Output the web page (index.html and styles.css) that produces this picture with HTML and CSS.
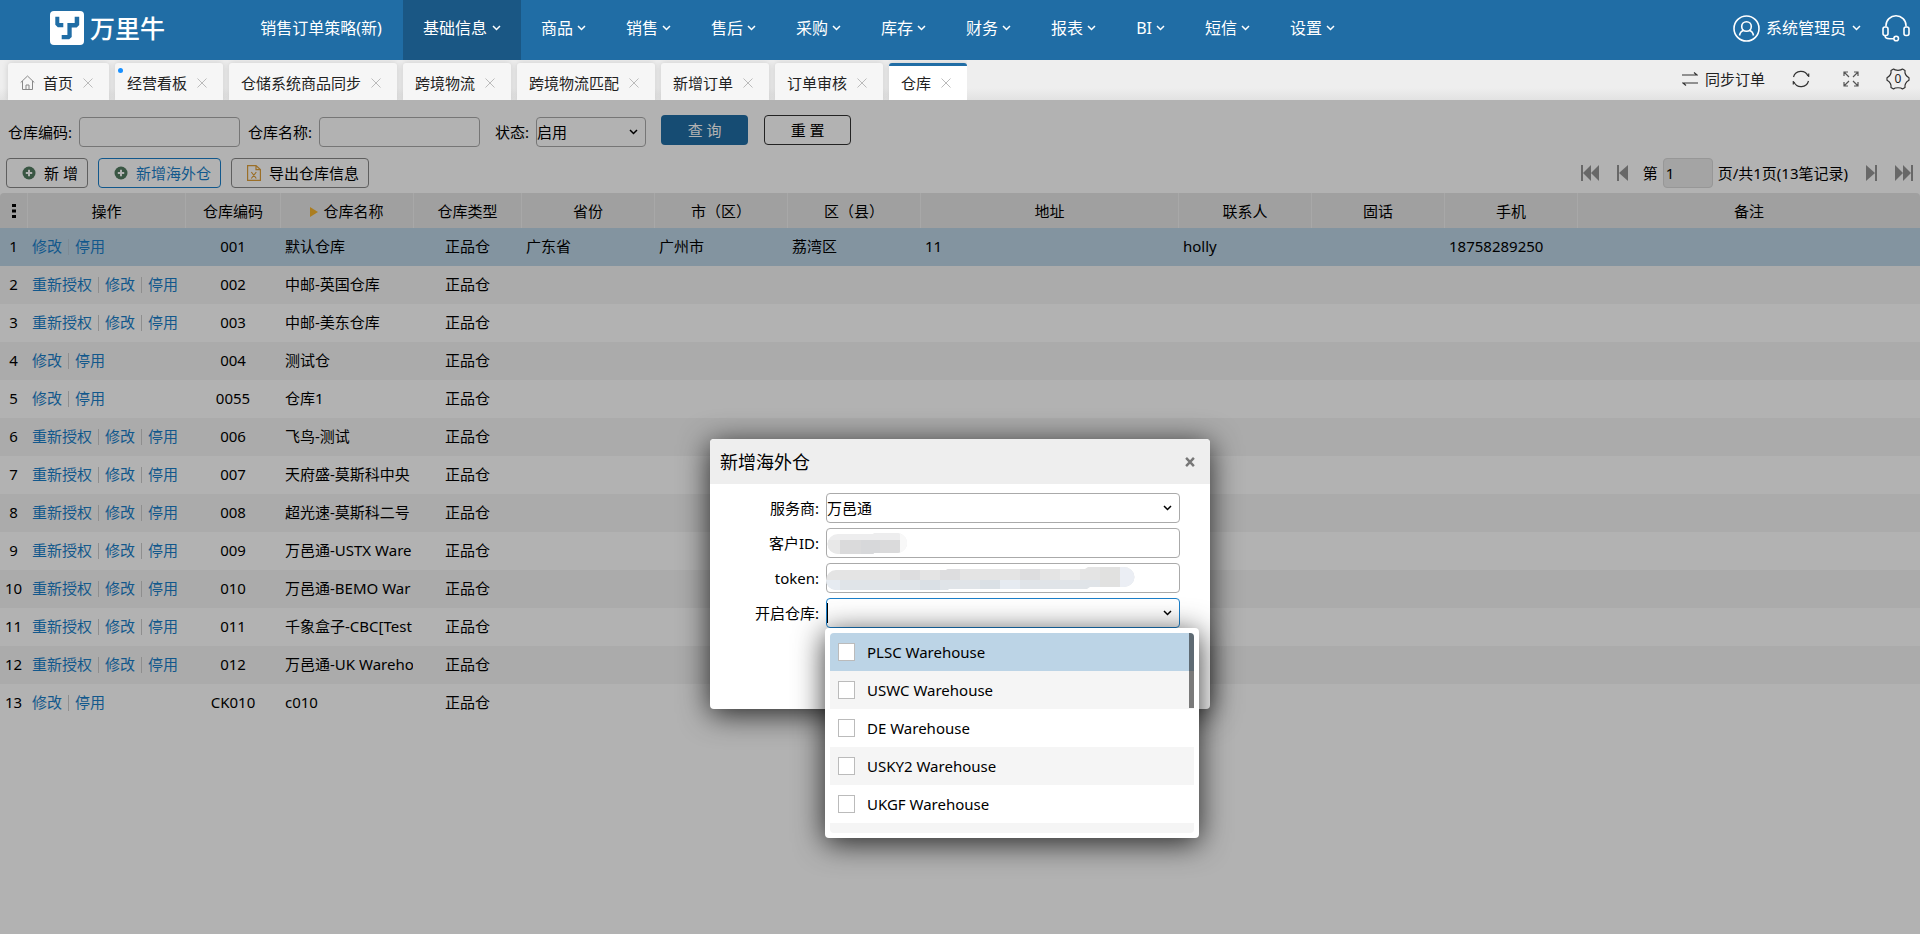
FILE: index.html
```html
<!DOCTYPE html>
<html lang="zh-CN">
<head>
<meta charset="utf-8">
<title>万里牛 - 仓库</title>
<link rel="stylesheet" href="styles.css">
</head>
<body>
<svg class="sprite" aria-hidden="true">
  <symbol id="chevron" viewBox="0 0 9 6"><path d="M1 1l3.5 3.5L8 1" fill="none" stroke="currentColor" stroke-width="1.5"/></symbol>
  <symbol id="cross" viewBox="0 0 10 10"><path d="M.5.5l9 9M9.500.5l-9 9" fill="none" stroke="currentColor" stroke-width="1"/></symbol>
  <symbol id="plus" viewBox="0 0 14 14"><circle cx="7" cy="7" r="6.500" fill="currentColor"/><path d="M7 3.800v6.400M3.800 7h6.400" stroke="#fff" stroke-width="2"/></symbol>
  <symbol id="page-prev" viewBox="0 0 11 16"><path d="M0 0h2v16H0zM11 0v16L2 8z" fill="currentColor"/></symbol>
  <symbol id="page-first" viewBox="0 0 18 16"><path d="M0 0h2v16H0zM10 0v16L2 8zM18 0v16l-8-8z" fill="currentColor"/></symbol>
</svg>

<header class="topbar">
  <a class="logo" href="#" aria-label="万里牛">
    <svg width="34" height="34" viewBox="0 0 34 34"><rect width="34" height="34" rx="4" fill="#fff"/><path d="M5.300 5.700h4v6.300h4v4.300h-5.500l-2.500-2.500zM24.700 5.700h4.500v8.300l-2.500 2.500h-5V26l-2.500 2.300h-7.500V24h5.700V12h7.300z" fill="#206da5"/></svg>
    <span>万里牛</span>
  </a>
  <nav class="menu">
    <a href="#">销售订单策略(新)</a>
    <a href="#" class="current">基础信息<svg class="chev"><use href="#chevron"/></svg></a>
    <a href="#">商品<svg class="chev"><use href="#chevron"/></svg></a>
    <a href="#">销售<svg class="chev"><use href="#chevron"/></svg></a>
    <a href="#">售后<svg class="chev"><use href="#chevron"/></svg></a>
    <a href="#">采购<svg class="chev"><use href="#chevron"/></svg></a>
    <a href="#">库存<svg class="chev"><use href="#chevron"/></svg></a>
    <a href="#">财务<svg class="chev"><use href="#chevron"/></svg></a>
    <a href="#">报表<svg class="chev"><use href="#chevron"/></svg></a>
    <a href="#">BI<svg class="chev"><use href="#chevron"/></svg></a>
    <a href="#">短信<svg class="chev"><use href="#chevron"/></svg></a>
    <a href="#">设置<svg class="chev"><use href="#chevron"/></svg></a>
  </nav>
  <div class="account">
    <a href="#" class="user">
      <svg width="27" height="27" viewBox="0 0 27 27" fill="none" stroke="#fff" stroke-width="1.600"><circle cx="13.500" cy="13.500" r="12.500"/><circle cx="13.500" cy="11.500" r="4.800"/><path d="M6.500 20.500c.5-3 2-4.500 4.500-5.200M20.500 20.500c-.5-3-2-4.500-4.500-5.200"/></svg>
      <span>系统管理员</span><svg class="chev"><use href="#chevron"/></svg>
    </a>
    <button class="icon-btn" type="button" aria-label="客服">
      <svg width="28" height="28" viewBox="0 0 28 28" fill="none" stroke="#fff" stroke-width="1.600"><path d="M4 12.500V11.500a10 9.700 0 0 1 20 0v1"/><rect x="1" y="13" width="5" height="8.500" rx="2"/><rect x="22" y="13" width="5" height="8.500" rx="2"/><path d="M3 21.500c0 2 2 3.300 4.500 3.300H12"/><circle cx="14.200" cy="24.500" r="2.300"/></svg>
    </button>
  </div>
</header>

<div class="tabbar">
  <div class="tabs">
    <div class="tab"><svg class="home" width="15" height="15" viewBox="0 0 15 15" fill="none" stroke="#888" stroke-width="1"><path d="M.7 7.500L7.500 1l6.800 6.500M2.500 6v8.500h10V6M6 14.500V10h3v4.500"/></svg><a href="#">首页</a><button type="button" aria-label="关闭"><svg><use href="#cross"/></svg></button></div>
    <div class="tab"><i class="dot"></i><a href="#">经营看板</a><button type="button" aria-label="关闭"><svg><use href="#cross"/></svg></button></div>
    <div class="tab"><a href="#">仓储系统商品同步</a><button type="button" aria-label="关闭"><svg><use href="#cross"/></svg></button></div>
    <div class="tab"><a href="#">跨境物流</a><button type="button" aria-label="关闭"><svg><use href="#cross"/></svg></button></div>
    <div class="tab"><a href="#">跨境物流匹配</a><button type="button" aria-label="关闭"><svg><use href="#cross"/></svg></button></div>
    <div class="tab"><a href="#">新增订单</a><button type="button" aria-label="关闭"><svg><use href="#cross"/></svg></button></div>
    <div class="tab"><a href="#">订单审核</a><button type="button" aria-label="关闭"><svg><use href="#cross"/></svg></button></div>
    <div class="tab active"><a href="#">仓库</a><button type="button" aria-label="关闭"><svg><use href="#cross"/></svg></button></div>
  </div>
  <div class="tools">
    <button class="sync" type="button"><svg width="16" height="14" viewBox="0 0 16 14" fill="none" stroke="#333" stroke-width="1.200"><path d="M0 3h15l-3-2.500M16 11H1l3 2.500"/></svg>同步订单</button>
    <button type="button" aria-label="刷新"><svg width="18" height="18" viewBox="0 0 18 18" fill="none" stroke="#333" stroke-width="1.200"><path d="M1.500 7a7.700 7.700 0 0 1 14.500-1M16.500 11a7.700 7.700 0 0 1-14.500 1M16.700 3.500V7M1.300 14.500V11"/></svg></button>
    <button type="button" aria-label="全屏"><svg width="16" height="16" viewBox="0 0 16 16" fill="none" stroke="#555" stroke-width="1.200"><path d="M1 5V1h4M1 1l5 5M11 1h4v4M15 1l-5 5M1 11v4h4M1 15l5-5M15 11v4h-4M15 15l-5-5"/></svg></button>
    <button class="gear" type="button" aria-label="任务 0"><svg width="24" height="22" viewBox="0 0 24 22" fill="none" stroke="#333" stroke-width="1.200" stroke-linejoin="round"><path d="M7.500 1C9 2.700 15 2.700 16.500 1L19 2.500C18.500 5.500 20 8 23 9.700v2.600C20 14 18.500 16.500 19 19.500L16.500 21C15 19.300 9 19.300 7.500 21L5 19.500C5.500 16.500 4 14 1 12.300V9.700C4 8 5.500 5.500 5 2.500z"/></svg><span>0</span></button>
  </div>
</div>

<main class="workspace">
  <form class="filters">
    <label for="code">仓库编码:</label><input id="code" type="text">
    <label for="name">仓库名称:</label><input id="name" type="text">
    <label for="state" class="wide">状态:</label>
    <span class="select"><select id="state"><option>启用</option></select><svg class="chev"><use href="#chevron"/></svg></span>
    <button class="query" type="button">查 询</button>
    <button class="reset" type="button">重 置</button>
  </form>
  <div class="actions">
    <button type="button"><svg class="plus"><use href="#plus"/></svg>新 增</button>
    <button type="button" class="on"><svg class="plus"><use href="#plus"/></svg>新增海外仓</button>
    <button type="button"><svg width="14" height="16" viewBox="0 0 14 16" fill="none" stroke="#dfa03a" stroke-width="1.200"><path d="M.6.6h8.400l4.400 4v10.800H.6zM9 .6v4h4.400M4.300 7l5 6.500M9.300 7l-5 6.500"/></svg>导出仓库信息</button>
    <div class="pager">
      <button type="button" aria-label="首页"><svg width="18" height="16"><use href="#page-first"/></svg></button>
      <button type="button" aria-label="上一页"><svg width="11" height="16"><use href="#page-prev"/></svg></button>
      <label for="page">第</label><input id="page" type="text" value="1"><span class="total">页/共1页(13笔记录)</span>
      <button type="button" aria-label="下一页" class="flip"><svg width="11" height="16"><use href="#page-prev"/></svg></button>
      <button type="button" aria-label="末页" class="flip"><svg width="18" height="16"><use href="#page-first"/></svg></button>
    </div>
  </div>

  <table class="grid">
    <colgroup><col class="c-no"><col class="c-op"><col class="c-code"><col class="c-mid"><col class="c-type"><col class="c-mid"><col class="c-mid"><col class="c-mid"><col class="c-addr"><col class="c-mid"><col class="c-mid"><col class="c-mid"><col></colgroup>
    <thead><tr>
      <th><svg width="4" height="14" viewBox="0 0 4 14"><path d="M0 0h4v3H0zM0 5.500h4v3H0zM0 11h4v3H0z"/></svg></th>
      <th>操作</th><th>仓库编码</th><th><svg class="sort" width="8" height="10" viewBox="0 0 8 10"><path d="M0 0l8 5-8 5z" fill="#f5b32e"/></svg>仓库名称</th><th>仓库类型</th><th>省份</th><th>市（区）</th><th>区（县）</th><th>地址</th><th>联系人</th><th>固话</th><th>手机</th><th>备注</th>
    </tr></thead>
    <tbody>
      <tr class="selected"><td>1</td><td><a href="#">修改</a><a href="#">停用</a></td><td>001</td><td>默认仓库</td><td>正品仓</td><td>广东省</td><td>广州市</td><td>荔湾区</td><td>11</td><td>holly</td><td></td><td>18758289250</td><td></td></tr>
      <tr><td>2</td><td><a href="#">重新授权</a><a href="#">修改</a><a href="#">停用</a></td><td>002</td><td>中邮-英国仓库</td><td>正品仓</td><td></td><td></td><td></td><td></td><td></td><td></td><td></td><td></td></tr>
      <tr><td>3</td><td><a href="#">重新授权</a><a href="#">修改</a><a href="#">停用</a></td><td>003</td><td>中邮-美东仓库</td><td>正品仓</td><td></td><td></td><td></td><td></td><td></td><td></td><td></td><td></td></tr>
      <tr><td>4</td><td><a href="#">修改</a><a href="#">停用</a></td><td>004</td><td>测试仓</td><td>正品仓</td><td></td><td></td><td></td><td></td><td></td><td></td><td></td><td></td></tr>
      <tr><td>5</td><td><a href="#">修改</a><a href="#">停用</a></td><td>0055</td><td>仓库1</td><td>正品仓</td><td></td><td></td><td></td><td></td><td></td><td></td><td></td><td></td></tr>
      <tr><td>6</td><td><a href="#">重新授权</a><a href="#">修改</a><a href="#">停用</a></td><td>006</td><td>飞鸟-测试</td><td>正品仓</td><td></td><td></td><td></td><td></td><td></td><td></td><td></td><td></td></tr>
      <tr><td>7</td><td><a href="#">重新授权</a><a href="#">修改</a><a href="#">停用</a></td><td>007</td><td>天府盛-莫斯科中央</td><td>正品仓</td><td></td><td></td><td></td><td></td><td></td><td></td><td></td><td></td></tr>
      <tr><td>8</td><td><a href="#">重新授权</a><a href="#">修改</a><a href="#">停用</a></td><td>008</td><td>超光速-莫斯科二号</td><td>正品仓</td><td></td><td></td><td></td><td></td><td></td><td></td><td></td><td></td></tr>
      <tr><td>9</td><td><a href="#">重新授权</a><a href="#">修改</a><a href="#">停用</a></td><td>009</td><td>万邑通-USTX Ware</td><td>正品仓</td><td></td><td></td><td></td><td></td><td></td><td></td><td></td><td></td></tr>
      <tr><td>10</td><td><a href="#">重新授权</a><a href="#">修改</a><a href="#">停用</a></td><td>010</td><td>万邑通-BEMO War</td><td>正品仓</td><td></td><td></td><td></td><td></td><td></td><td></td><td></td><td></td></tr>
      <tr><td>11</td><td><a href="#">重新授权</a><a href="#">修改</a><a href="#">停用</a></td><td>011</td><td>千象盒子-CBC[Test</td><td>正品仓</td><td></td><td></td><td></td><td></td><td></td><td></td><td></td><td></td></tr>
      <tr><td>12</td><td><a href="#">重新授权</a><a href="#">修改</a><a href="#">停用</a></td><td>012</td><td>万邑通-UK Wareho</td><td>正品仓</td><td></td><td></td><td></td><td></td><td></td><td></td><td></td><td></td></tr>
      <tr><td>13</td><td><a href="#">修改</a><a href="#">停用</a></td><td>CK010</td><td>c010</td><td>正品仓</td><td></td><td></td><td></td><td></td><td></td><td></td><td></td><td></td></tr>
    </tbody>
  </table>

  <div class="backdrop">
    <section class="dialog" role="dialog" aria-labelledby="dialog-title">
      <header><h2 id="dialog-title">新增海外仓</h2><button type="button" aria-label="关闭"><svg width="10" height="10" viewBox="0 0 9 9"><path d="M1 .8l7 7.400M8 .8L1 8.200" stroke="#777" stroke-width="2.200"/></svg></button></header>
      <form class="fields">
        <label for="provider">服务商:</label>
        <span class="select"><select id="provider"><option>万邑通</option></select><svg class="chev"><use href="#chevron"/></svg></span>
        <label for="client">客户ID:</label>
        <span class="field"><input id="client" type="text">
          <svg class="mask" width="80" height="23" viewBox="0 0 80 23"><defs><clipPath id="m1"><path d="M11 1h35l1-1h21a10.500 10 0 0 1 3 20H47l-1 1H11A10.500 10 0 0 1 11 1z"/></clipPath></defs><g clip-path="url(#m1)"><path d="M0 0h80v23H0z" fill="#ededee"/><path d="M0 7h13v16H0z" fill="#e8e8e8"/><path d="M13 7h60v16H13z" fill="#dadadb"/><path d="M34 7h19v16H34z" fill="#d7d8da"/><path d="M73 0h7v23h-7z" fill="#f8f8f8"/></g></svg></span>
        <label for="token">token:</label>
        <span class="field"><input id="token" type="text">
          <svg class="mask wide" width="309" height="24" viewBox="0 0 309 24"><defs><clipPath id="m2"><path d="M10 3h110l2-1h137l3-2h36a10.500 10 0 0 1 0 20h-34l-3 2H123l-1 1H10A10 10 0 0 1 10 3z"/></clipPath></defs><g clip-path="url(#m2)"><path d="M0 0h309v13H0z" fill="#e4e4e4"/><path d="M0 13h309v11H0z" fill="#e0e4e8"/><path d="M74 0h20v13H74zM114 0h20v13h-20zM194 0h20v13h-20z" fill="#dddddf"/><path d="M234 0h20v13h-20z" fill="#eaeaea"/><path d="M94 13h20v11H94zM154 13h20v11h-20z" fill="#dae0e5"/><path d="M0 13h14v11H0zM174 13h20v11h-20z" fill="#e6ebf1"/><path d="M274 0h20v24h-20z" fill="#e1e1e0"/><path d="M294 0h15v24h-15z" fill="#ebeef4"/></g></svg></span>
        <label for="open">开启仓库:</label>
        <span class="field focus"><input id="open" type="text" role="combobox" aria-expanded="true"><i class="caret"></i><svg class="chev"><use href="#chevron"/></svg>
          <div class="options"><div class="scroll">
            <label class="hover"><input type="checkbox">PLSC Warehouse</label>
            <label><input type="checkbox">USWC Warehouse</label>
            <label><input type="checkbox">DE Warehouse</label>
            <label><input type="checkbox">USKY2 Warehouse</label>
            <label><input type="checkbox">UKGF Warehouse</label>
            <label><input type="checkbox"></label>
            <i class="thumb"></i>
          </div></div>
        </span>
      </form>
    </section>
  </div>
</main>
</body>
</html>
```
FILE: styles.css
```css
* { box-sizing: border-box; }
body {
  margin: 0;
  min-height: 100vh;
  display: flex;
  flex-direction: column;
  font: 15px/20px "Noto Sans", "Noto Sans CJK SC", sans-serif;
  color: #000;
  background: #fff;
}
a { color: inherit; text-decoration: none; }
button, input, select { font: inherit; color: inherit; }
button { padding: 0; border: 0; background: none; cursor: pointer; }
svg { display: block; flex: none; }
.sprite { position: absolute; width: 0; height: 0; }
.chev { width: 9px; height: 6px; }

/* Top bar */
.topbar { display: flex; height: 60px; background: #206da5; color: #fff; font-size: 16px; }
.logo { display: flex; align-items: center; gap: 6px; width: 239px; padding: 0 0 4px 50px; font-size: 25px; font-weight: 500; }
.menu { display: flex; }
.menu a { display: flex; align-items: center; justify-content: center; gap: 4px; padding: 0 20px 4px; white-space: nowrap; }
.menu a:first-child { min-width: 164px; }
.menu .current { gap: 5px; background: #1a5784; }
.account { display: flex; align-items: center; gap: 21px; margin-left: auto; padding: 0 10px 4px 0; }
.user { display: flex; align-items: center; gap: 6px; }

/* Tab strip */
.tabbar { display: flex; justify-content: space-between; height: 40px; background: linear-gradient(#eee 70%, #e2e2e2); }
.tabs { display: flex; gap: 6px; padding: 3px 0 0 8px; overflow: hidden; }
.tab { position: relative; display: flex; align-items: center; padding: 2px 16px 0 12px; gap: 10px; background: #f6f6f6; border-radius: 3px 3px 0 0; box-shadow: 0 0 6px rgba(0, 0, 0, .15); white-space: nowrap; color: #222; }
.tab.active { background: #fff; padding-top: 0; border-top: 3px solid #206da5; }
.tab .home { margin-right: -2px; }
.tab button svg { width: 10px; height: 10px; color: #bbb; }
.dot { position: absolute; left: 3px; top: 5px; width: 5px; height: 5px; border-radius: 50%; background: #1890ff; }
.tools { display: flex; align-items: center; gap: 27px; padding: 0 10px 2px 0; color: #222; }
.sync { display: flex; align-items: center; gap: 7px; }
.tools .gear { position: relative; }
.tools .sync + button { margin-right: 6px; }
.gear span { position: absolute; inset: 0; font-size: 12px; line-height: 22px; text-align: center; }

/* Workspace */
.workspace { position: relative; flex: 1; }
.filters { display: flex; align-items: flex-start; padding: 15px 0 0 8px; height: 58px; }
.filters label { margin: 7px 7px 0 0; }
.filters label.wide { margin-left: 7px; }
input[type="text"], select { height: 30px; padding: 0 2px; border: 1px solid #aaa; border-radius: 4px; background: #fff; outline: 0; }
.filters > input { width: 161px; margin: 2px 8px 0 0; }
.select { position: relative; display: block; }
select { display: block; width: 100%; padding: 0; appearance: none; }
.filters .select { width: 110px; margin: 2px 15px 0 0; }
.select .chev, .field .chev { position: absolute; right: 8px; top: 12px; pointer-events: none; }
.query, .reset { width: 87px; height: 30px; border-radius: 4px; }
.query { background: #206da5; color: #fff; margin-right: 16px; }
.reset { border: 1px solid #333; }
.actions { display: flex; align-items: center; gap: 10px; padding: 0 7px 5px 6px; }
.actions > button { display: flex; align-items: center; gap: 8px; height: 30px; padding: 0 9px 0 15px; border: 1px solid #888; border-radius: 4px; }
.actions .on { color: #1b7fc9; border-color: #1b7fc9; }
.plus { width: 14px; height: 14px; color: #527b60; }
.pager { display: flex; align-items: center; margin-left: auto; }
.pager svg { color: #969696; }
.pager button { margin-right: 18px; }
.pager label { margin: 0 5px 0 -3px; }
.pager input { width: 50px; background: #ebebeb; border-color: #d8d8d8; }
.pager .total { margin: 0 18px 0 5px; }
.pager button:last-child { margin-right: 0; }
.flip { transform: scaleX(-1); }

/* Warehouse table */
.grid { width: 100%; table-layout: fixed; border-collapse: separate; border-spacing: 0; }
.c-no { width: 28px; }
.c-op { width: 158px; }
.c-code { width: 95px; }
.c-mid { width: 133px; }
.c-type { width: 108px; }
.c-addr { width: 258px; }
.grid th { height: 35px; padding: 0; font-weight: 400; background: #e6e6e6; border-right: 1px solid #f1f1f1; }
.grid th:first-child { border-top-left-radius: 4px; }
.grid th:last-child { border-top-right-radius: 4px; border-right: 0; }
.grid th:first-child svg { margin: 0 auto; }
.sort { display: inline-block; margin-right: 5px; }
.grid td { height: 38px; padding: 0 0 2px 4px; overflow: hidden; white-space: nowrap; border-right: 1px solid transparent; }
.grid td:nth-child(1), .grid td:nth-child(3), .grid td:nth-child(5) { padding-left: 0; text-align: center; }
.grid tbody tr:nth-child(even) { background: #f5f5f5; }
.grid tbody .selected { background: #bcd4e6; }
.grid td a { color: #1b7fc9; }
.grid td a + a::before { content: ""; display: inline-block; width: 1px; height: 16px; margin: 0 6px; vertical-align: -3px; background: #ccc; }
.grid .selected a + a::before { background: #b4c6d4; }

/* Dialog */
.backdrop { position: absolute; inset: 0; display: flex; justify-content: center; align-items: flex-start; padding-top: 339px; background: rgba(0, 0, 0, .3); }
.dialog { width: 500px; min-height: 270px; background: #fff; border-radius: 4px; box-shadow: 0 5px 30px rgba(0, 0, 0, .8); }
.dialog header { display: flex; align-items: center; justify-content: space-between; height: 45px; padding: 0 15px 0 10px; background: #eee; border-radius: 4px 4px 0 0; }
.dialog h2 { margin: 0; font-size: 18px; font-weight: 400; }
.fields { display: grid; grid-template-columns: 109px 354px; column-gap: 7px; row-gap: 5px; align-items: center; padding: 9px 0 0; }
.fields > label { text-align: right; }
.field { position: relative; display: block; }
.field > input { display: block; width: 100%; }
.focus > input { border-color: #1b7fc9; }
.mask { position: absolute; left: 1px; top: 5px; }
.mask.wide { left: 0; top: 4px; }
.caret { position: absolute; left: 1px; top: 5px; width: 1px; height: 20px; background: #000; }
.options { position: absolute; left: -1px; top: 30px; width: 374px; padding: 5px; background: #fff; border-radius: 4px; box-shadow: 0 5px 30px rgba(0, 0, 0, .8); }
.scroll { position: relative; height: 200px; overflow: hidden; border-radius: 4px; }
.options label { display: flex; align-items: center; gap: 12px; height: 38px; padding-left: 8px; }
.options label:nth-child(even) { background: #f5f5f5; }
.options .hover { background: #bcd4e6; }
.options input { appearance: none; width: 17px; height: 18px; margin: 0; border: 1px solid #bbb; background: #fff; }
.thumb { position: absolute; right: 0; top: 0; width: 5px; height: 75px; background: rgba(0, 0, 0, .5); }
```
